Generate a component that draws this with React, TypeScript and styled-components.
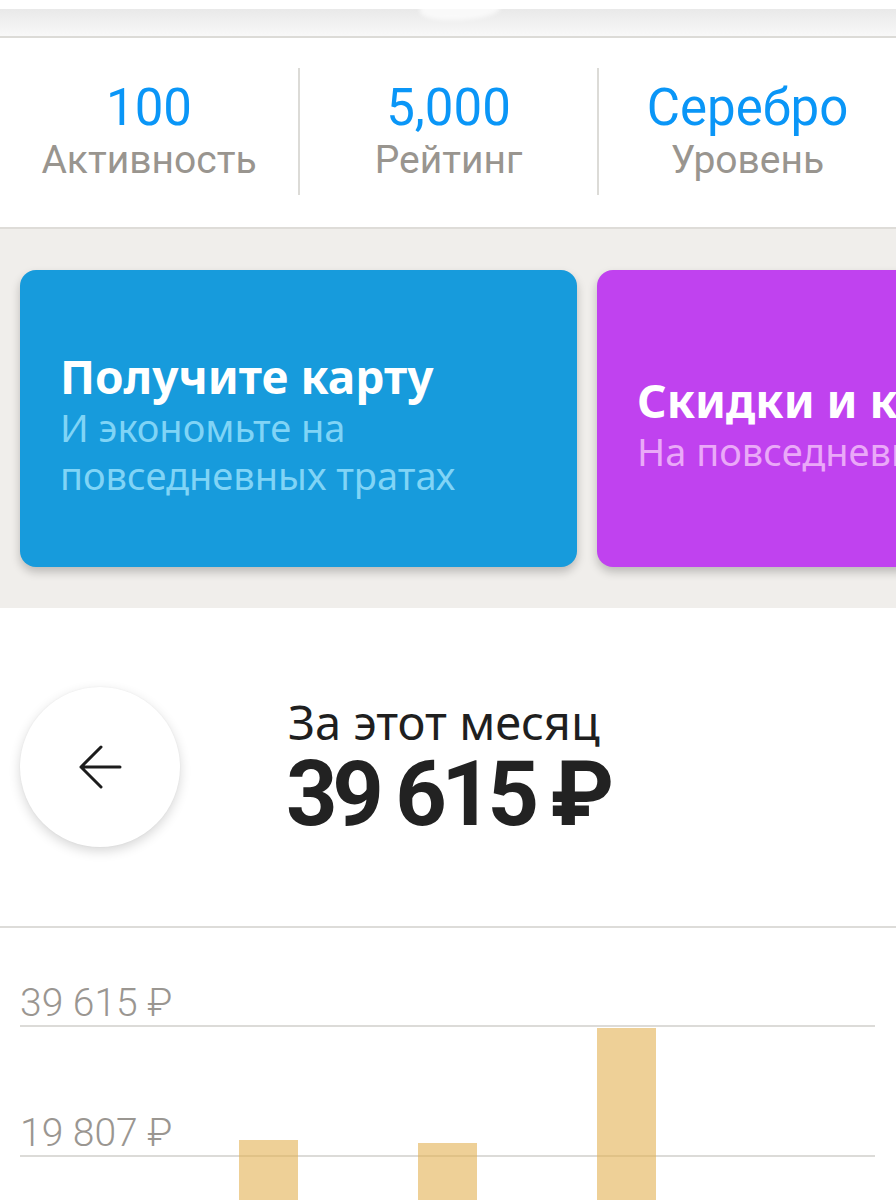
import React from "react";
import styled, { createGlobalStyle } from "styled-components";

const Global = createGlobalStyle`
  html, body { margin: 0; padding: 0; background: #ffffff; }
  body { font-family: Roboto, "Noto Sans", "Liberation Sans", sans-serif; overflow: hidden; }
  * { box-sizing: border-box; }
`;

const Page = styled.div`
  width: 896px;
  height: 1200px;
  overflow: hidden;
  background: #ffffff;
  display: flex;
  flex-direction: column;
`;

const TopBar = styled.div`
  height: 38px;
  flex: none;
  border-top: 9px solid #ffffff;
  background: linear-gradient(#e9e9e9, #f8f8f8);
  border-bottom: 2px solid #dcdbd7;
  position: relative;
`;

const TopBlob = styled.div`
  position: absolute;
  left: 420px;
  top: -9px;
  width: 80px;
  height: 20px;
  border-radius: 0 0 60% 40%;
  background: rgba(255, 255, 255, 0.7);
  filter: blur(2px);
`;

const Stats = styled.div`
  height: 191px;
  flex: none;
  display: grid;
  grid-template-columns: 298px 299px 299px;
  align-items: center;
  border-bottom: 2px solid #dedcd8;
`;

const Stat = styled.div<{ $divider?: boolean }>`
  height: 127px;
  margin-top: -3px;
  display: flex;
  flex-direction: column;
  align-items: center;
  justify-content: center;
  border-left: ${(p) => (p.$divider ? "2px solid #dcdbd7" : "none")};
`;

const StatValue = styled.div`
  font-size: 51px;
  line-height: 54px;
  margin-top: 4px;
  color: #0a96f7;
`;

const StatLabel = styled.div`
  font-size: 39px;
  line-height: 50px;
  color: #99958f;
`;

const Promo = styled.div`
  height: 379px;
  flex: none;
  background: #f0eeeb;
  display: flex;
  gap: 20px;
  padding: 41px 0 41px 20px;
  overflow: hidden;
`;

const Card = styled.div<{ $bg: string }>`
  flex: none;
  width: 557px;
  height: 297px;
  border-radius: 16px;
  background: ${(p) => p.$bg};
  box-shadow: 0 5px 10px rgba(0, 0, 0, 0.22);
  display: flex;
  flex-direction: column;
  justify-content: center;
  padding: 10px 0 0 40px;
  font-family: "Noto Sans", "Open Sans", sans-serif;
`;

const CardTitle = styled.div`
  font-size: 46px;
  line-height: 54px;
  font-weight: 700;
  color: #ffffff;
  white-space: nowrap;
`;

const CardText = styled.div<{ $color: string }>`
  font-size: 38px;
  line-height: 48px;
  color: ${(p) => p.$color};
  white-space: nowrap;
`;

const Summary = styled.div`
  height: 320px;
  flex: none;
  display: flex;
  align-items: center;
  padding-left: 20px;
  gap: 108px;
  border-bottom: 2px solid #dddcd9;
`;

const RoundButton = styled.button`
  width: 160px;
  height: 160px;
  border-radius: 50%;
  border: none;
  background: #ffffff;
  box-shadow: 0 4px 12px rgba(0, 0, 0, 0.16), 0 0 2px rgba(0, 0, 0, 0.05);
  display: flex;
  align-items: center;
  justify-content: center;
  padding: 0;
  flex: none;
`;

const SummaryText = styled.div`
  display: flex;
  flex-direction: column;
  margin-top: 2px;
`;

const SummaryLabel = styled.div`
  font-family: "Noto Sans", "Open Sans", sans-serif;
  font-size: 47px;
  line-height: 54px;
  color: #1f1f1f;
`;

const SummaryValue = styled.div`
  font-size: 90px;
  line-height: 92px;
  font-weight: 700;
  color: #222222;
  letter-spacing: -5.5px;
  margin-left: -2px;
`;

const Chart = styled.div`
  position: relative;
  flex: 1;
  min-height: 0;
  overflow: hidden;
  padding: 53px 21px 0 20px;
`;

const GridRow = styled.div`
  display: flex;
  flex-direction: column;
  margin-bottom: 84px;
`;

const GridLabel = styled.div`
  font-size: 39px;
  line-height: 44px;
  font-weight: 300;
  color: #9a9691;
`;

const GridLine = styled.div`
  height: 2px;
  background: #dcdbd8;
`;

const Bars = styled.div`
  position: absolute;
  left: 239px;
  top: 99px;
  bottom: 0;
  display: flex;
  align-items: flex-end;
  gap: 120px;
`;

const Bar = styled.div`
  width: 59px;
  background: rgba(227, 177, 82, 0.6);
`;

const bars = [60, 57, 172];

export default function App() {
  return (
    <Page>
      <Global />
      <TopBar>
        <TopBlob />
      </TopBar>
      <Stats>
        <Stat>
          <StatValue>100</StatValue>
          <StatLabel>Активность</StatLabel>
        </Stat>
        <Stat $divider>
          <StatValue>5,000</StatValue>
          <StatLabel>Рейтинг</StatLabel>
        </Stat>
        <Stat $divider>
          <StatValue>Серебро</StatValue>
          <StatLabel>Уровень</StatLabel>
        </Stat>
      </Stats>
      <Promo>
        <Card $bg="#179bdc">
          <CardTitle>Получите карту</CardTitle>
          <CardText $color="#80d4f6">И экономьте на</CardText>
          <CardText $color="#80d4f6">повседневных тратах</CardText>
        </Card>
        <Card $bg="#c042ef">
          <CardTitle>Скидки и кэшбэк</CardTitle>
          <CardText $color="#eaa9f8">На повседневные траты</CardText>
        </Card>
      </Promo>
      <Summary>
        <RoundButton aria-label="Назад">
          <svg width="44" height="44" viewBox="-22 -22 44 44" fill="none">
            <path
              d="M-19 0 H20 M1 -20 L-19 0 L1 20"
              stroke="#1c1c1c"
              strokeWidth="3"
              strokeLinecap="round"
              strokeLinejoin="round"
            />
          </svg>
        </RoundButton>
        <SummaryText>
          <SummaryLabel>За этот месяц</SummaryLabel>
          <SummaryValue>39 615 ₽</SummaryValue>
        </SummaryText>
      </Summary>
      <Chart>
        <GridRow>
          <GridLabel>39 615 ₽</GridLabel>
          <GridLine />
        </GridRow>
        <GridRow>
          <GridLabel>19 807 ₽</GridLabel>
          <GridLine />
        </GridRow>
        <Bars>
          {bars.map((h, i) => (
            <Bar key={i} style={{ height: h }} />
          ))}
        </Bars>
      </Chart>
    </Page>
  );
}
